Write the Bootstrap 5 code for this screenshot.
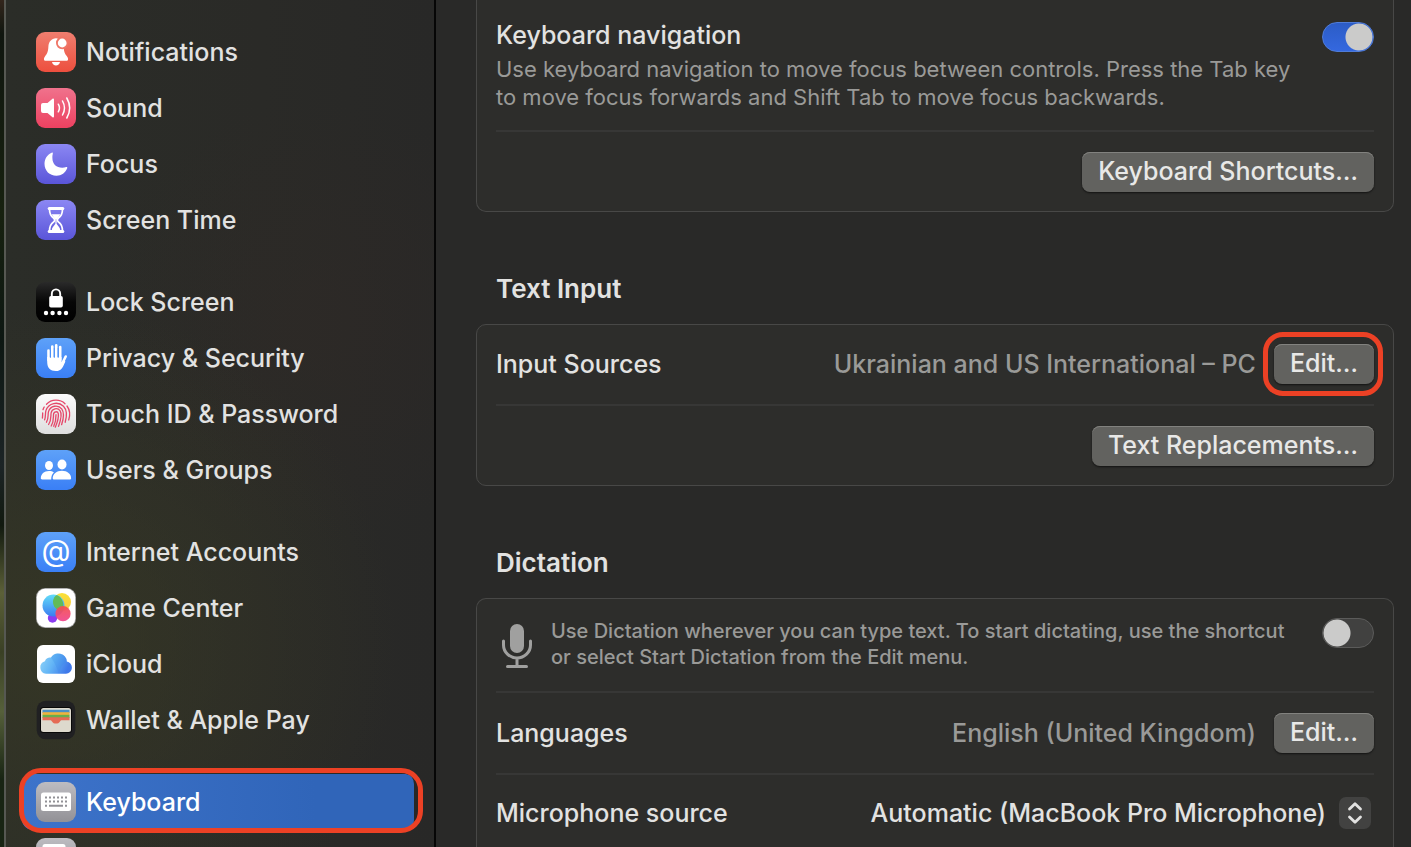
<!DOCTYPE html>
<html lang="en" data-bs-theme="dark">
<head>
<meta charset="utf-8">
<meta name="viewport" content="width=device-width, initial-scale=1">
<title>Keyboard</title>
<link href="https://cdn.jsdelivr.net/npm/bootstrap@5.3.0/dist/css/bootstrap.min.css" rel="stylesheet">
<style>
:root { --ring: #ec4125; --label: #e2e2e1; --muted: #9a9a98; }
body { font-family: Inter, "Liberation Sans", sans-serif; font-size: 25px; font-weight: 500; line-height: 32px; color: var(--label); background: #292928; }
.desk { width: 4px; background: linear-gradient(#33261c 0, #10160f 4%, #17210f 25%, #0d1712 40%, #1c2426 55%, #11190f 62%, #5c6038 70%, #3a4025 77%, #56603a 84%, #182413 92%); }
.side { width: 432px; border-left: 2px solid #565852; border-right: 2px solid #060606;
  background: radial-gradient(circle 340px at 12% 76%, #393a24b0, #393a2400), radial-gradient(circle 220px at 72% 38%, #30292680, #30292600), linear-gradient(90deg, #2b2d28, #2a2a27 60%, #282827); padding: 24px 18px 0 16px; }
.side .nav-link { height: 56px; padding: 0 0 0 14px; gap: 10px; color: var(--label); border-radius: 10px; }
.side .nav-link svg { flex: none; width: 40px; height: 40px; }
.side ul + ul { margin-top: 26px; }
.side .nav-link.active { position: relative; color: #fff; background: linear-gradient(90deg, #3d73ca, #3065b9 75%); background-clip: padding-box; border: solid transparent; border-width: 0 2px 0 0; }
.ringed { position: relative; }
.ringed::after { content: ""; position: absolute; inset: -12px -9px -12px -11px; border: 5px solid var(--ring); border-radius: 20px; pointer-events: none; }
.nav-link.ringed::after { inset: -6px -9px -3px -3px; border-radius: 22px; }
.pane { min-width: 0; padding: 0 17px 0 40px; }
.pane h2 { font-size: 26px; line-height: 32px; font-weight: 600; margin: 61px 0 19px; padding-left: 20px; color: var(--label); }
.box { background: #2d2d2b; border: 1px solid #484847; border-radius: 10px; padding: 0 19px; }
.box.first { border-top: 0; border-radius: 0 0 10px 10px; }
.line { padding: 20px 0; gap: 18px; }
.line:first-child { padding-top: 19px; }
.line:last-child { padding-bottom: 19px; }
.first .line:first-child { padding-bottom: 19px; }
.box.more { border-bottom: 0; border-radius: 10px 10px 0 0; }
.more .line:last-child { padding: 22px 0; }
.line + .line { border-top: 2px solid #373736; }
.note { font-size: 22px; line-height: 28px; font-weight: 400; color: var(--muted); }
.note.tight { font-size: 20px; line-height: 26px; font-weight: 500; }
.hint { color: var(--muted); }
.push { height: 40px; padding: 0 16px 2px; font-size: 25px; font-weight: 500; line-height: 36px; color: #e8e8e7; background: #62625f; border: 0; border-radius: 8px; box-shadow: inset 0 1px #82827f, 0 1px 2px #0009; }
.push:hover { background: #6c6c69; color: #fff; }
.form-check-input.flip { width: 52px; height: 30px; margin: 0; flex: none; border: 1px solid #5b5b5a; border-radius: 15px; background: radial-gradient(circle at 14px 14px, #cbcbca 13px, #0000 14px), #414140; }
.form-check-input.flip:checked { margin-top: 3px; border-color: #4f7cd8; background: radial-gradient(circle at 36px 14px, #cbcbca 13px, #0000 14px), linear-gradient(#2c5cc6, #3468df); }
.picker select { appearance: none; border: 0; background: none; color: var(--label); font: inherit; height: 32px; padding: 0 48px 0 0; text-align: right; text-align-last: right; }
.picker svg { position: absolute; right: 3px; top: 0; pointer-events: none; }
</style>
</head>
<body>
<svg width="0" height="0" class="position-absolute" aria-hidden="true">
  <defs>
    <linearGradient id="red" x2="0" y2="1"><stop stop-color="#f07e6f"/><stop offset="1" stop-color="#ed4f3e"/></linearGradient>
    <linearGradient id="pink" x2="0" y2="1"><stop stop-color="#f0728c"/><stop offset="1" stop-color="#ec4160"/></linearGradient>
    <linearGradient id="violet" x2="0" y2="1"><stop stop-color="#8b87f3"/><stop offset="1" stop-color="#5a55d9"/></linearGradient>
    <linearGradient id="black" x2="0" y2="1"><stop stop-color="#2a2a2a"/><stop offset=".5" stop-color="#060606"/><stop offset="1"/></linearGradient>
    <linearGradient id="blue" x2="0" y2="1"><stop stop-color="#5ea1f8"/><stop offset="1" stop-color="#3a7ff6"/></linearGradient>
    <linearGradient id="white" x2="0" y2="1"><stop stop-color="#fbfbfb"/><stop offset="1" stop-color="#dedede"/></linearGradient>
    <linearGradient id="gray" x2="0" y2="1"><stop stop-color="#bdbcc1"/><stop offset="1" stop-color="#929196"/></linearGradient>
    <linearGradient id="sky" x2="1" y2=".3"><stop stop-color="#93d6f8"/><stop offset=".5" stop-color="#62b4f6"/><stop offset="1" stop-color="#3f79ea"/></linearGradient>
    <linearGradient id="gc1" x2="0" y2="1"><stop stop-color="#62dcf8"/><stop offset="1" stop-color="#3b7cf0"/></linearGradient>
    <linearGradient id="gc2" x2="0" y2="1"><stop stop-color="#fbe135"/><stop offset="1" stop-color="#f5c84a"/></linearGradient>
    <linearGradient id="gc3" x2="0" y2="1"><stop stop-color="#f4504e"/><stop offset="1" stop-color="#f0468d"/></linearGradient>
  </defs>
</svg>
<div class="d-flex vh-100 overflow-hidden">
  <div class="desk flex-shrink-0"></div>
  <nav class="side flex-shrink-0" aria-label="Settings">
    <ul class="nav flex-column">
      <li><a href="#" class="nav-link d-flex align-items-center"><svg viewBox="0 0 40 40"><rect width="40" height="40" rx="9" fill="url(#red)"/><path fill="#fff" d="M20 6.300c-4.600 0-7.300 3.600-7.600 8.200-.3 5.500-1.300 7.300-3.300 9.700-.8 1-1.200 1.800-1.200 2.700 0 1.200.7 1.900 1.800 1.900h20.600c1.100 0 1.800-.7 1.800-1.900 0-.9-.4-1.700-1.200-2.700-2-2.400-3-4.200-3.300-9.700C27.300 9.900 24.600 6.300 20 6.300zM16 30h8c-.4 2.200-2 3.600-4 3.600s-3.600-1.400-4-3.600z"/><circle cx="26.200" cy="11" r="6.200" fill="#ef7667"/><circle cx="26.200" cy="11" r="4.400" fill="#fff"/></svg>Notifications</a></li>
      <li><a href="#" class="nav-link d-flex align-items-center"><svg viewBox="0 0 40 40"><rect width="40" height="40" rx="9" fill="url(#pink)"/><path fill="#fff" d="M7 15h4.500l5-4.200c.7-.6 1.500-.2 1.500.7v17c0 .9-.8 1.200-1.500.7l-5-4.200H7a2 2 0 0 1-2-2v-6a2 2 0 0 1 2-2z"/><path fill="none" stroke="#fff" stroke-width="1.500" stroke-linecap="round" d="M22.300 16.200q2.300 3.800 0 7.600M26.500 13q4 7 0 14M30.800 10q5.800 10 0 20"/></svg>Sound</a></li>
      <li><a href="#" class="nav-link d-flex align-items-center"><svg viewBox="0 0 40 40"><rect width="40" height="40" rx="9" fill="url(#violet)"/><path fill="#fff" d="M15.700 8.700c.7-.3 1.400.2 1.100 1A12.500 12.500 0 0 0 16.400 14c0 6 4 9.800 9.800 9.800 1.500 0 2.800-.2 4-.7.8-.3 1.300.3 1 1.100C29.500 28.700 25.500 31.700 20.500 31.700 13.500 31.700 8.500 26.700 8.500 19.700c0-5 2.900-9.300 7.200-11z"/></svg>Focus</a></li>
      <li><a href="#" class="nav-link d-flex align-items-center"><svg viewBox="0 0 40 40"><rect width="40" height="40" rx="9" fill="url(#violet)"/><path fill="none" stroke="#fff" stroke-width="1.700" d="M13.500 9c0 5 1 7 4 9 1.500 1.200 1.500 2.800 0 4-3 2-4 4-4 9h13c0-5-1-7-4-9-1.500-1.200-1.500-2.800 0-4 3-2 4-4 4-9z"/><g fill="#fff"><rect x="11.700" y="7" width="16.600" height="3" rx="1.500"/><rect x="11.700" y="30" width="16.600" height="3" rx="1.500"/><path d="M15.800 14.200h8.400c-.7 2.200-2.600 3.300-3.600 5.200v4.300c1.200 2 3.600 3.600 3.600 6.300h-8.400c0-2.700 2.400-4.300 3.600-6.300v-4.300c-1-1.900-2.900-3-3.600-5.200z"/></g></svg>Screen Time</a></li>
    </ul>
    <ul class="nav flex-column">
      <li><a href="#" class="nav-link d-flex align-items-center"><svg viewBox="0 0 40 40"><rect width="40" height="40" rx="9" fill="url(#black)"/><g fill="#fff"><rect x="13.200" y="14" width="13.600" height="11.500" rx="1.800"/><circle cx="10" cy="31" r="2.200"/><circle cx="16.600" cy="31" r="2.200"/><circle cx="23.400" cy="31" r="2.200"/><circle cx="30" cy="31" r="2.200"/></g><path fill="none" stroke="#fff" stroke-width="1.900" d="M15.800 15.500V12a4.200 4.600 0 0 1 8.400 0v3.500"/></svg>Lock Screen</a></li>
      <li><a href="#" class="nav-link d-flex align-items-center"><svg viewBox="0 0 40 40"><rect width="40" height="40" rx="9" fill="url(#blue)"/><path fill="none" stroke="#fff" stroke-width="2.600" stroke-linecap="round" d="M12.500 12.500V22M16.300 8.500V22M20.200 7.300V22M24.200 9V22M29.700 18.500L26 26"/><path fill="#fff" d="M11.200 19h14.300v5l2.200-2 1.700 1.400c-2.200 5-3.700 9.600-9.600 9.600-5.400 0-8.600-3-8.600-9z"/><path stroke="#4b91f7" stroke-width=".8" d="M14.400 12v8M18.300 10v10M22.200 10v10"/></svg>Privacy &amp; Security</a></li>
      <li><a href="#" class="nav-link d-flex align-items-center"><svg viewBox="0 0 40 40"><rect width="40" height="40" rx="9" fill="url(#white)"/><g fill="none" stroke="#e5476a" stroke-width="1.300" stroke-linecap="round"><path d="M10.500 10.200C15.500 5 24 4.900 29 9.700M8.200 13c-.5.800-.9 1.700-1.200 2.700M31 12c3 4 3.300 9 1.700 14M6.700 19c-.1 2-.1 3.500-.3 5"/><path d="M8.600 25.800c1.300-3 .4-6.600 1.400-9.400C12.500 9 22 7 27.500 12.300c3.500 3.700 3.600 9.300 1.700 16"/><path d="M10.500 28.200c2.300-3.800 1.200-7.500 2-10.500 1.700-6.200 9.600-7.400 13.200-2.800 2.700 3.500 2 9.500-.1 15.800"/><path d="M12.600 30.500c3-4.500 2-8.500 2.500-11.500.7-4.500 6.500-5.700 8.900-2.400 2.200 3 1.300 8-1.500 15.800"/><path d="M15.200 32c2.800-4.500 2.100-8.500 2.300-11.500.2-3.300 4.200-3.700 4.800-.8.500 3.300-.6 8-3 13.500M20 20.700c.1 4-.4 7.500-2.300 11.500"/></g></svg>Touch ID &amp; Password</a></li>
      <li><a href="#" class="nav-link d-flex align-items-center"><svg viewBox="0 0 40 40"><rect width="40" height="40" rx="9" fill="url(#blue)"/><g fill="#fff"><ellipse cx="13" cy="15.500" rx="4" ry="4.500"/><path d="M4.800 28.200c0-4 3.200-7.200 8.200-7.200 2 0 3.600.5 4.900 1.400-1.800 1.600-2.700 3.700-2.700 7H6.200c-.9 0-1.400-.4-1.400-1.200z"/><ellipse cx="26" cy="14.500" rx="4.500" ry="4.900"/><path d="M16.700 28.300c0-4.200 3.800-7.500 9.200-7.500s9.200 3.300 9.200 7.500c0 .8-.6 1.300-1.500 1.300H18.200c-.9 0-1.500-.5-1.500-1.300z"/></g></svg>Users &amp; Groups</a></li>
    </ul>
    <ul class="nav flex-column">
      <li><a href="#" class="nav-link d-flex align-items-center"><svg viewBox="0 0 40 40"><rect width="40" height="40" rx="9" fill="url(#blue)"/><text x="20" y="29" text-anchor="middle" font-size="30" font-weight="400" fill="#fff">@</text></svg>Internet Accounts</a></li>
      <li><a href="#" class="nav-link d-flex align-items-center"><svg viewBox="0 0 40 40"><rect width="40" height="40" rx="9" fill="#999"/><rect x=".8" y=".8" width="38.400" height="38.400" rx="8.500" fill="#fff"/><circle cx="16.500" cy="30" r="4.700" fill="#8a3cf0"/><circle cx="26" cy="14" r="9" fill="url(#gc2)"/><circle cx="17.500" cy="17.500" r="11" fill="url(#gc1)"/><path fill="#62bb58" d="M18.200 9.500A9 9 0 0 0 25.600 23 11 11 0 0 0 20.800 7 9 9 0 0 0 18.200 9.500z"/><circle cx="27" cy="25.700" r="7.600" fill="url(#gc3)" opacity=".93"/></svg>Game Center</a></li>
      <li><a href="#" class="nav-link d-flex align-items-center"><svg viewBox="0 0 40 40"><rect x="1" y="1" width="38" height="38" rx="6" fill="#fff"/><path fill="url(#sky)" d="M10 29.800a6.400 6.400 0 0 1-1.100-12.500A5.200 5.200 0 0 1 15 13.500 8.600 8.600 0 0 1 30.800 17.500 6.200 6.200 0 0 1 30 29.800z"/><path fill="#398be8" opacity=".25" d="M15 13.500A8.600 8.600 0 0 1 30.800 17.500C26 20 24 24 23 29.800 21 24 18 17 15 13.500z"/></svg>iCloud</a></li>
      <li><a href="#" class="nav-link d-flex align-items-center"><svg viewBox="0 0 40 40"><rect x=".7" y=".7" width="38.600" height="38.600" rx="9" fill="#202022"/><rect x="4" y="7" width="32" height="26" rx="3.500" fill="#080808"/><rect x="5" y="8" width="30" height="24" rx="2.500" fill="#ddd9cd"/><path fill="#4a90c4" d="M6.500 9.800h27V13h-27z"/><path fill="#efb33d" d="M6.500 12.200h27v3h-27z"/><path fill="#6aae4b" d="M6.500 14.800h27V18h-27z"/><path fill="#e56b55" d="M6.500 17.200h27v3H26c-1 0-1.500.5-2 1.200-1 1.600-2.300 2.200-4 2.200s-3-.6-4-2.200c-.5-.7-1-1.200-2-1.200H6.500z"/></svg>Wallet &amp; Apple Pay</a></li>
    </ul>
    <ul class="nav flex-column">
      <li><a href="#" class="nav-link d-flex align-items-center active ringed" aria-current="page"><svg viewBox="0 0 40 40"><rect width="40" height="40" rx="9" fill="url(#gray)"/><rect x="5" y="10.500" width="30" height="18.500" rx="2.500" fill="#fff"/><path stroke="#929196" stroke-width="2" stroke-dasharray="2 2" d="M9 15.500h22M9 19.500h22"/><path stroke="#929196" stroke-width="2" d="M9 23.700h2M13 23.700h14M29 23.700h2"/></svg>Keyboard</a></li>
      <li><a href="#" class="nav-link d-flex align-items-center" aria-label="Trackpad"><svg viewBox="0 0 40 40"><rect width="40" height="40" rx="9" fill="url(#gray)"/><rect x="6.500" y="6" width="23" height="26" rx="2.500" fill="#fff"/></svg></a></li>
    </ul>
  </nav>
  <main class="pane flex-grow-1">
    <section class="box first">
      <div class="line d-flex justify-content-between align-items-start">
        <label for="kbnav"><span class="d-block mb-1">Keyboard navigation</span><span class="note d-block">Use keyboard navigation to move focus between controls. Press the Tab key<br>to move focus forwards and Shift Tab to move focus backwards.</span></label>
        <input class="form-check-input flip" type="checkbox" role="switch" id="kbnav" checked>
      </div>
      <div class="line d-flex justify-content-end"><button type="button" class="btn push">Keyboard Shortcuts…</button></div>
    </section>
    <h2>Text Input</h2>
    <section class="box">
      <div class="line d-flex align-items-center">
        <span class="me-auto">Input Sources</span><span class="hint">Ukrainian and US International – PC</span>
        <span class="ringed d-flex"><button type="button" class="btn push">Edit…</button></span>
      </div>
      <div class="line d-flex justify-content-end"><button type="button" class="btn push">Text Replacements…</button></div>
    </section>
    <h2>Dictation</h2>
    <section class="box more">
      <div class="line d-flex align-items-start">
        <svg class="flex-shrink-0 mt-1" width="37" height="49" viewBox="0 0 37 49" aria-hidden="true"><rect x="14" y="2" width="14" height="29" rx="7" fill="#a0a09f"/><path fill="none" stroke="#a0a09f" stroke-width="3" stroke-linecap="round" d="M7.500 19v4a13.500 13 0 0 0 27 0v-4M21 36v8M11.500 44.500h19"/></svg>
        <label for="dict" class="note tight me-auto">Use Dictation wherever you can type text. To start dictating, use the shortcut<br>or select Start Dictation from the Edit menu.</label>
        <input class="form-check-input flip" type="checkbox" role="switch" id="dict">
      </div>
      <div class="line d-flex align-items-center">
        <span class="me-auto">Languages</span><span class="hint">English (United Kingdom)</span>
        <button type="button" class="btn push">Edit…</button>
      </div>
      <div class="line d-flex align-items-center">
        <label for="mic" class="me-auto">Microphone source</label>
        <span class="picker position-relative d-flex"><select id="mic"><option>Automatic (MacBook Pro Microphone)</option></select>
        <svg width="32" height="32" viewBox="0 0 32 32" aria-hidden="true"><rect width="32" height="32" rx="7" fill="#424241"/><path fill="none" stroke="#e2e2e1" stroke-width="2.800" stroke-linecap="round" stroke-linejoin="round" d="M10.500 12l5.500-5.300 5.500 5.300M10.500 20l5.500 5.300 5.500-5.300"/></svg></span>
      </div>
    </section>
  </main>
</div>
<script src="https://cdn.jsdelivr.net/npm/bootstrap@5.3.0/dist/js/bootstrap.bundle.min.js"></script>
</body>
</html>
